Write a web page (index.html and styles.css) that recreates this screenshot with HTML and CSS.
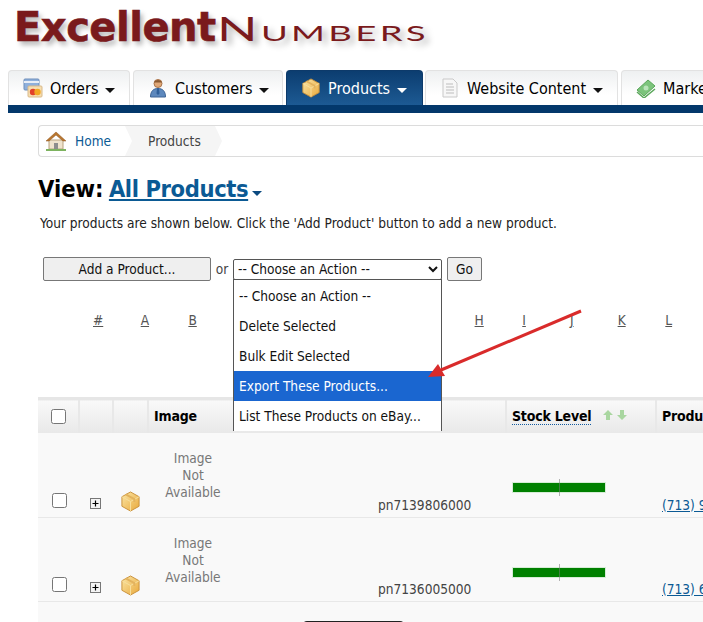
FILE: index.html
```html
<!DOCTYPE html>
<html lang="en">
<head>
    <meta charset="UTF-8">
    <title>Products</title>
    <link rel="stylesheet" href="styles.css">
</head>
<body>
    <svg class="icon-defs" width="0" height="0">
        <defs>
            <linearGradient id="boxFill" x1="0" y1="0" x2="1" y2="1">
                <stop offset="0" stop-color="#fbe6a6"/>
                <stop offset="1" stop-color="#e9a93c"/>
            </linearGradient>
            <symbol id="box" viewBox="0 0 22 22">
                <path d="M11 1 20 6v10l-9 5-9-5V6z" fill="url(#boxFill)" stroke="#c9913a"/>
                <path d="M2 6l9 5 9-5M11 11v10" fill="none" stroke="#f7dfa0"/>
                <path d="M6 3.5l9 5v3" fill="none" stroke="#e3b35e" stroke-width="2"/>
            </symbol>
            <symbol id="plus" viewBox="0 0 11 11">
                <rect x=".5" y=".5" width="10" height="10" fill="#f4f4f4" stroke="#777"/>
                <path d="M2.5 5.5h6M5.5 2.5v6" stroke="#000" stroke-width="1.2"/>
            </symbol>
        </defs>
    </svg>

    <div class="logo"><span class="logo-bold">Excellent</span><span class="logo-thin">Numbers</span></div>

    <div class="tabs">
        <a class="tab tab-orders">
            <svg class="tab-icon" viewBox="0 0 20 20">
                <rect x="1" y="1" width="15" height="11" rx="1" fill="#8fb0dc" stroke="#6f8fbb"/>
                <rect x="1" y="3" width="15" height="2" fill="#e9eef6"/>
                <rect x="5" y="8" width="14" height="11" rx="1" fill="#f6deb0" stroke="#d8b98a"/>
                <circle cx="10" cy="14" r="3.2" fill="#e2402b"/>
                <circle cx="14.5" cy="14" r="3.2" fill="#f3a823"/>
            </svg>
            <span>Orders</span><span class="caret"></span>
        </a>
        <a class="tab tab-customers">
            <svg class="tab-icon" viewBox="0 0 20 20">
                <circle cx="10" cy="5.5" r="4" fill="#e0a878" stroke="#a9744a"/>
                <path d="M6 4.5C7 1 13 1 14 4.5z" fill="#8a5a32"/>
                <path d="M2.5 19c0-6 3-8.500 7.500-8.500s7.500 2.500 7.500 8.500z" fill="#5d88bd" stroke="#3f6596"/>
                <path d="M9 10.500h2l.5 5-1.500 1.500-1.500-1.500z" fill="#2f5f99"/>
            </svg>
            <span>Customers</span><span class="caret"></span>
        </a>
        <a class="tab tab-products active">
            <svg class="tab-icon"><use href="#box"/></svg>
            <span>Products</span><span class="caret"></span>
        </a>
        <a class="tab tab-content">
            <svg class="tab-icon" viewBox="0 0 20 20">
                <path d="M3 1h10l4 4v14H3z" fill="#f7f7f7" stroke="#c9c9c9"/>
                <path d="M6 6h7M6 9h8M6 12h8M6 15h8" stroke="#bdbdbd"/>
            </svg>
            <span>Website Content</span><span class="caret"></span>
        </a>
        <a class="tab tab-marketing">
            <svg class="tab-icon" viewBox="0 0 20 20">
                <path d="M1 12 12 2l7 6-11 10z" fill="#7cc47c" stroke="#5aa75a"/>
                <circle cx="10" cy="10" r="2.500" fill="#b9e4b9"/>
                <path d="M1 14l7 6 11-9" fill="none" stroke="#5aa75a" stroke-width="1.500"/>
            </svg>
            <span>Marketing</span><span class="caret"></span>
        </a>
    </div>
    <div class="tabs-bar"></div>

    <div class="content">
        <div class="breadcrumb">
            <a class="crumb crumb-home">
                <svg class="home-icon" viewBox="0 0 22 20">
                    <path d="M4 9h14v9H4z" fill="#efe3cd" stroke="#b9a37e"/>
                    <path d="M9 12h4v6H9z" fill="#8d8d8d"/>
                    <path d="M11 1 1 10h3l7-6 7 6h3z" fill="#b9762f" stroke="#8c5620" stroke-width=".5"/>
                    <path d="M1 18h20v2H1z" fill="#7db35f"/>
                </svg>
                Home
            </a>
            <span class="crumb crumb-current">Products</span>
        </div>

        <h1 class="view-title">View: <a>All Products</a><span class="caret caret-blue"></span></h1>
        <p class="intro">Your products are shown below. Click the 'Add Product' button to add a new product.</p>

        <div class="actions">
            <button class="btn btn-add">Add a Product...</button>
            <span class="or">or</span>
            <div class="action-select">
                <select class="select">
                    <option>-- Choose an Action --</option>
                </select>
                <ul class="select-menu">
                    <li>-- Choose an Action --</li>
                    <li>Delete Selected</li>
                    <li>Bulk Edit Selected</li>
                    <li class="selected">Export These Products...</li>
                    <li>List These Products on eBay...</li>
                </ul>
            </div>
            <button class="btn btn-go">Go</button>
        </div>

        <div class="letters">
            <a>#</a><a>A</a><a>B</a><a class="after-menu">H</a><a>I</a><a>J</a><a>K</a><a>L</a>
        </div>

        <table class="products">
            <colgroup>
                <col class="col-check"><col class="col-expand"><col class="col-type"><col class="col-image">
                <col class="col-code"><col class="col-stock"><col class="col-phone">
            </colgroup>
            <thead>
                <tr>
                    <th><input type="checkbox" class="check"></th>
                    <th></th>
                    <th></th>
                    <th>Image</th>
                    <th></th>
                    <th><span class="stock-head">Stock Level</span>
                        <svg class="sort" viewBox="0 0 24 11">
                            <path d="M5 0l5 5H7v5H3V5H0z" fill="#a9d6a0"/>
                            <path d="M17 0h4v5h3l-5 5-5-5h3z" fill="#a9d6a0"/>
                        </svg>
                    </th>
                    <th>Product Phone</th>
                </tr>
            </thead>
            <tbody>
                <tr>
                    <td class="cell-check"><input type="checkbox" class="check"></td>
                    <td class="cell-icon"><svg class="plus"><use href="#plus"/></svg></td>
                    <td class="cell-icon"><svg class="box"><use href="#box"/></svg></td>
                    <td class="cell-image"><div class="no-image">Image<br>Not<br>Available</div></td>
                    <td class="cell-code">pn7139806000</td>
                    <td class="cell-stock"><div class="stock-bar"></div></td>
                    <td class="cell-phone"><a>(713) 987-2100</a></td>
                </tr>
                <tr>
                    <td class="cell-check"><input type="checkbox" class="check"></td>
                    <td class="cell-icon"><svg class="plus"><use href="#plus"/></svg></td>
                    <td class="cell-icon"><svg class="box"><use href="#box"/></svg></td>
                    <td class="cell-image"><div class="no-image">Image<br>Not<br>Available</div></td>
                    <td class="cell-code">pn7136005000</td>
                    <td class="cell-stock"><div class="stock-bar"></div></td>
                    <td class="cell-phone"><a>(713) 600-5000</a></td>
                </tr>
                <tr>
                    <td></td><td></td><td></td>
                    <td class="cell-image"><div class="no-image">Image<br>Not<br>Available</div></td>
                    <td class="cell-dark"><div class="dark-pill"></div></td>
                    <td></td><td></td>
                </tr>
            </tbody>
        </table>
    </div>

    <svg class="arrow" viewBox="0 0 703 622">
        <path d="M581 311 441 370" stroke="#d92b2b" stroke-width="3" fill="none"/>
        <path d="M428 377 438 364 445 376z" fill="#d92b2b"/>
    </svg>
</body>
</html>
```

FILE: styles.css
```css
:root {
    --navy: #03386b;
    --link: #0b5a94;
    --line: #dcdcdc;
}
html, body {
    height: 622px;
    overflow: hidden;
}
body {
    position: relative;
    margin: 0;
    background: #fff;
    color: #000;
    font-family: "DejaVu Sans Condensed", "Noto Sans", sans-serif;
    font-size: 13.6px;
}
a {
    cursor: pointer;
}
.icon-defs {
    position: absolute;
}

/* logo */
.logo {
    display: flex;
    align-items: baseline;
    height: 70px;
    padding-left: 14px;
    white-space: nowrap;
    color: #7a1a1c;
    text-shadow: 3px 4px 5px rgba(0, 0, 0, 0.28);
}
.logo-bold {
    font-family: "DejaVu Sans", sans-serif;
    font-weight: bold;
    font-size: 40px;
    line-height: 54px;
    letter-spacing: -0.5px;
    -webkit-text-stroke: 0.6px #7a1a1c;
}
.logo-thin {
    display: inline-block;
    font-family: "Lato", sans-serif;
    font-weight: 400;
    font-size: 32px;
    font-variant: small-caps;
    letter-spacing: 2px;
    margin-left: 1px;
    transform: scaleX(1.66);
    transform-origin: left;
}

/* tabs */
.tabs {
    display: flex;
    gap: 3px;
    height: 35px;
    padding-left: 8px;
    overflow: hidden;
}
.tab {
    display: flex;
    align-items: center;
    flex: none;
    box-sizing: border-box;
    height: 35px;
    padding: 0 0 0 14px;
    border: 1px solid #e2e2e2;
    border-bottom: 0;
    border-radius: 4px 4px 0 0;
    background: linear-gradient(#eef0f1, #fff 70%);
    font-size: 16px;
    white-space: nowrap;
}
.tab-orders { width: 122px; }
.tab-customers { width: 150px; }
.tab-products { width: 137px; }
.tab-content { width: 193px; margin-left: -1px; }
.tab-marketing { width: 140px; }
.tab.active {
    border-color: #0d3a6a;
    background: linear-gradient(#0c3d70, #1d5a93);
    color: #fff;
}
.tab-icon {
    flex: none;
    width: 20px;
    height: 20px;
    margin-right: 7px;
}
.caret {
    display: inline-block;
    width: 0;
    height: 0;
    border: 5px solid transparent;
    border-top-color: #111;
    border-bottom: 0;
}
.tab .caret {
    margin: 4px 0 0 7px;
}
.tab.active .caret {
    border-top-color: #fff;
}
.tabs-bar {
    height: 8px;
    margin-left: 8px;
    background: var(--navy);
}

/* content */
.content {
    padding: 12px 0 0 38px;
    width: 800px;
}
.breadcrumb {
    display: flex;
    align-items: center;
    box-sizing: border-box;
    height: 32px;
    border: 1px solid var(--line);
    border-right: 0;
    border-radius: 4px 0 0 4px;
}
.crumb {
    position: relative;
    display: flex;
    align-items: center;
    height: 30px;
}
.crumb-home {
    width: 80px;
    padding-left: 6px;
    color: var(--link);
}
.home-icon {
    width: 22px;
    height: 20px;
    margin-right: 8px;
}
.crumb-current {
    padding-left: 23px;
    width: 67px;
    background: #f5f5f5;
    color: #444;
}
.crumb::after {
    content: "";
    position: absolute;
    top: 0;
    right: -7px;
    width: 7px;
    height: 30px;
    background: #f5f5f5;
    clip-path: polygon(0 0, 100% 50%, 0 100%);
}
.crumb-home::after {
    right: auto;
    left: 86px;
    background: #fff;
    z-index: 1;
}
.view-title {
    margin: 17px 0 0;
    font-size: 23.5px;
    line-height: 30px;
}
.view-title a {
    margin-left: -2px;
    letter-spacing: -0.4px;
    color: var(--link);
    text-decoration: underline;
}
.caret-blue {
    border-top-color: #0b4a80;
    margin: 0 0 1px 4px;
}
.intro {
    margin: 10px 0 0 2px;
    line-height: 18px;
    color: #222;
}

/* action row */
.actions {
    display: flex;
    align-items: center;
    height: 24px;
    margin: 25px 0 0 5px;
}
.btn {
    box-sizing: border-box;
    height: 24px;
    border: 1px solid #777;
    border-radius: 2px;
    background: #efefef;
    font: inherit;
    color: #111;
    padding: 0;
}
.btn-add { width: 168px; }
.btn-go { width: 35px; margin-left: 5px; }
.or {
    width: 22px;
    text-align: center;
    color: #444;
}
.action-select {
    position: relative;
    width: 209px;
}
.select {
    display: block;
    box-sizing: border-box;
    width: 209px;
    height: 21px;
    border: 1px solid #555;
    border-radius: 2px;
    background: #fff;
    font: inherit;
    color: #111;
}
.select-menu {
    position: absolute;
    z-index: 2;
    top: 20px;
    left: 0;
    right: 0;
    margin: 0;
    padding: 1px 0 0;
    list-style: none;
    background: #fff;
    border: 1px solid #555;
    border-bottom: 0;
}
.select-menu li {
    height: 30px;
    padding-left: 5px;
    line-height: 30px;
    color: #111;
}
.select-menu .selected {
    background: #1a66d0;
    color: #fff;
}

/* letter index */
.letters {
    display: flex;
    margin: 30px 0 0 55px;
    height: 86px;
}
.letters a {
    flex: none;
    width: 47.700px;
    text-decoration: underline;
    color: #555;
    line-height: 18px;
}
.letters .after-menu {
    margin-left: 238.500px;
}

/* product table */
.products {
    border-collapse: collapse;
    table-layout: fixed;
    width: 762px;
    margin-top: 0;
}
.col-check { width: 41px; }
.col-expand { width: 34px; }
.col-type { width: 35px; }
.col-image { width: 90px; }
.col-code { width: 268px; }
.col-stock { width: 150px; }
.col-phone { width: 144px; }
.products th {
    box-sizing: border-box;
    height: 34px;
    padding: 0 0 0 5px;
    text-align: left;
    border-top: 3px solid #e6e6e6;
    border-left: 2px solid #e8e8e8;
    background: linear-gradient(#f9f9f9, #e8e8e8);
    font-size: 14px;
    letter-spacing: -0.2px;
    white-space: nowrap;
}
.products th:first-child {
    border-left: 0;
    padding-left: 13px;
}
.check {
    display: block;
    width: 15px;
    height: 15px;
    margin: 0;
}
.stock-head {
    border-bottom: 1px dotted #145b9e;
}
.sort {
    width: 24px;
    height: 11px;
    margin-left: 7px;
}
.products td {
    box-sizing: border-box;
    height: 84.500px;
    padding: 0 0 4px;
    vertical-align: bottom;
    background: #f9f9f9;
    border-bottom: 1px solid #e8e8e8;
}
.products td.cell-check {
    padding-left: 14px;
}
.products .cell-check .check {
    margin-bottom: 5px;
}
.plus {
    display: block;
    width: 11px;
    height: 11px;
    margin: 0 0 4px 11px;
}
.box {
    display: block;
    width: 21px;
    height: 21px;
    margin: 0 0 1px 7px;
}
.products td.cell-image {
    vertical-align: top;
    padding: 17px 0 0;
}
.no-image {
    text-align: center;
    line-height: 17px;
    color: #777;
}
.products td.cell-code {
    padding-left: 140px;
    color: #444;
}
.products td.cell-stock {
    vertical-align: top;
    padding-top: 49px;
}
.stock-bar {
    position: relative;
    width: 92px;
    height: 9px;
    margin-left: 6px;
    border: 1px solid #d6ecd6;
    background: #008000;
}
.stock-bar::after {
    content: "";
    position: absolute;
    left: 46px;
    top: -4px;
    width: 1px;
    height: 17px;
    background: rgba(120, 120, 120, 0.55);
}
.products td.cell-phone {
    padding-left: 6px;
}
.cell-phone a {
    color: var(--link);
    text-decoration: underline;
}
.products td.cell-dark {
    vertical-align: top;
    padding-top: 19px;
}
.dark-pill {
    width: 103px;
    height: 12px;
    margin-left: 64px;
    border-radius: 5px;
    background: #222;
}

/* annotation drawn over the screenshot */
.arrow {
    position: absolute;
    z-index: 3;
    top: 0;
    left: 0;
    width: 703px;
    height: 622px;
    pointer-events: none;
}
```
